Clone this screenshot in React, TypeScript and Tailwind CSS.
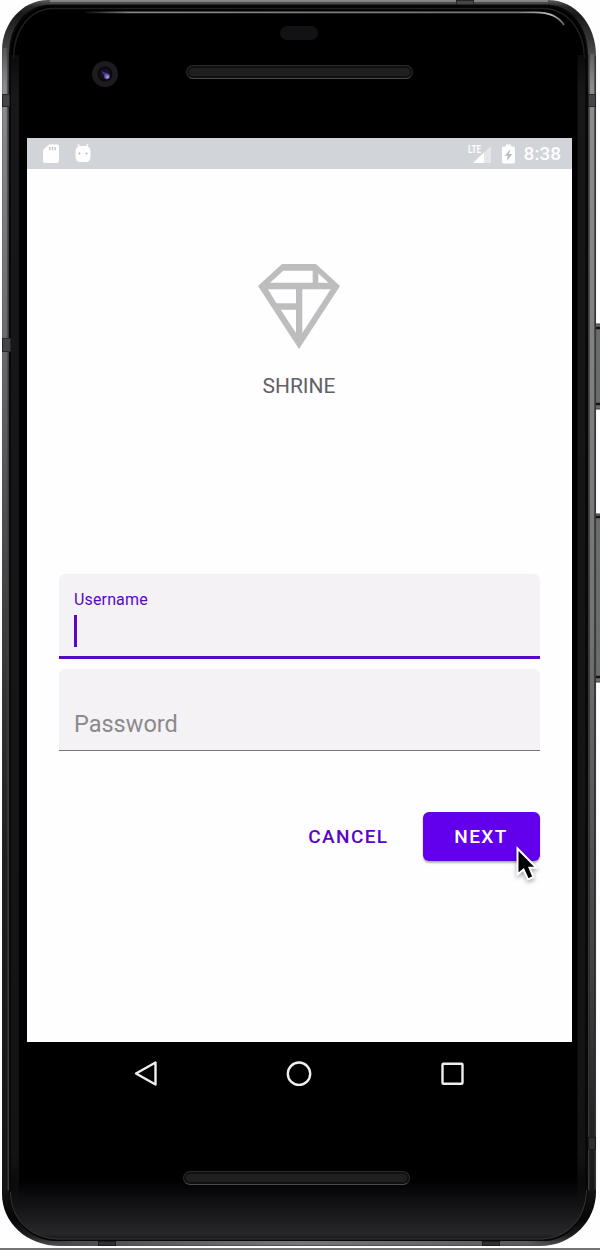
import React from "react";

function DeviceCasing() {
  return (
    <svg className="absolute inset-0 h-[1250px] w-[600px]" viewBox="0 0 600 1250" fill="none" aria-hidden="true">
      <defs>
        <linearGradient id="metal" x1="0" y1="0" x2="0" y2="1250" gradientUnits="userSpaceOnUse">
          <stop offset="0" stopColor="#5c5c5d" />
          <stop offset="0.005" stopColor="#2a2a2b" />
          <stop offset="0.012" stopColor="#19191a" />
          <stop offset="0.035" stopColor="#3c3c3d" />
          <stop offset="0.06" stopColor="#6a6b6c" />
          <stop offset="0.3" stopColor="#5f6061" />
          <stop offset="0.5" stopColor="#434344" />
          <stop offset="0.7" stopColor="#262627" />
          <stop offset="0.95" stopColor="#151516" />
          <stop offset="0.975" stopColor="#050505" />
          <stop offset="0.988" stopColor="#1c1c1d" />
          <stop offset="1" stopColor="#636364" />
        </linearGradient>
        <linearGradient id="shineLeft" x1="0" y1="40" x2="0" y2="1200" gradientUnits="userSpaceOnUse">
          <stop offset="0" stopColor="#4b4b4c" />
          <stop offset="0.04" stopColor="#8c8d8e" />
          <stop offset="0.25" stopColor="#6c6d6e" />
          <stop offset="0.5" stopColor="#3c3d3d" />
          <stop offset="0.7" stopColor="#1e1e1f" />
          <stop offset="1" stopColor="#141415" />
        </linearGradient>
        <linearGradient id="shineRight" x1="0" y1="40" x2="0" y2="1200" gradientUnits="userSpaceOnUse">
          <stop offset="0" stopColor="#4b4b4c" />
          <stop offset="0.04" stopColor="#8c8d8e" />
          <stop offset="0.5" stopColor="#747475" />
          <stop offset="0.8" stopColor="#414142" />
          <stop offset="1" stopColor="#161617" />
        </linearGradient>
        <linearGradient id="glass" x1="0" y1="1180" x2="0" y2="1240" gradientUnits="userSpaceOnUse">
          <stop offset="0" stopColor="#000000" />
          <stop offset="0.3" stopColor="#0e0d0f" />
          <stop offset="0.9" stopColor="#272629" />
          <stop offset="1" stopColor="#151516" />
        </linearGradient>
        <linearGradient id="strip" x1="0" y1="20" x2="0" y2="1215" gradientUnits="userSpaceOnUse">
          <stop offset="0" stopColor="#171618" stopOpacity="0" />
          <stop offset="0.06" stopColor="#171618" />
          <stop offset="0.95" stopColor="#131214" />
          <stop offset="1" stopColor="#131214" stopOpacity="0" />
        </linearGradient>
        <linearGradient id="topLine" x1="80" y1="0" x2="566" y2="0" gradientUnits="userSpaceOnUse">
          <stop offset="0" stopColor="#777777" stopOpacity="0" />
          <stop offset="0.1" stopColor="#858586" />
          <stop offset="0.9" stopColor="#777778" />
          <stop offset="0.97" stopColor="#bdbdbd" />
          <stop offset="1" stopColor="#555555" />
        </linearGradient>
        <linearGradient id="bottomEdge" x1="40" y1="0" x2="560" y2="0" gradientUnits="userSpaceOnUse">
          <stop offset="0" stopColor="#4a4a4b" stopOpacity="0" />
          <stop offset="0.06" stopColor="#4a4a4b" />
          <stop offset="0.5" stopColor="#777778" />
          <stop offset="0.94" stopColor="#5a5a5b" />
          <stop offset="1" stopColor="#4a4a4b" stopOpacity="0" />
        </linearGradient>
      </defs>
      <g fill="#6b6c6c" stroke="#3b3b3c" strokeWidth="1">
        <rect x="594" y="324" width="8" height="85" />
        <rect x="594" y="514" width="8" height="168" />
      </g>
      <path d="M596 328h4M596 404h4M596 517h4M596 677h4" stroke="#151516" strokeWidth="2.5" />
      <path d="M2 50C2 24 22 0 48 0H548C575 0 596 24 596 56V1192C596 1220 573 1246 540 1246H60C26 1246 2 1222 2 1194Z" fill="url(#metal)" />
      <path d="M4.6 48V1190" stroke="url(#shineLeft)" strokeWidth="4" />
      <path d="M592 54V1190" stroke="url(#shineRight)" strokeWidth="4" />
      <path d="M8.3 50V1190" stroke="#3c3c3d" strokeWidth="1.5" />
      <path d="M595.3 56V1190M588.7 54V1190" stroke="#3a3a3b" strokeWidth="1.5" />
      <path d="M50 1H548" stroke="#858586" strokeWidth="2" />
      <path d="M50 3.5H548" stroke="#4c4c4d" strokeWidth="2" />
      <path d="M10 54C10 27 26 5.5 52 5.5H545C571 5.5 587 27 587 57V1190C587 1220 567 1240.5 540 1240.5H60C29 1240.5 10 1218 10 1190Z" fill="url(#glass)" stroke="#080808" strokeWidth="2" />
      <path d="M13.5 58C14 29 30 9 53 8.5H543C567 9 584 29 584.5 58" stroke="#1f1f20" strokeWidth="1.5" />
      <path d="M15 1210V55M581.5 55V1210" stroke="url(#strip)" strokeWidth="8" />
      <path d="M85 12.3H535C548 12.3 558 15 564 25" stroke="url(#topLine)" strokeWidth="1.8" />
      <path d="M10.5 1192C11 1219 30 1239 60 1239H540C567 1239 586 1219 586.5 1190" stroke="#363538" strokeWidth="1" />
      <path d="M50 1243H550" stroke="url(#bottomEdge)" strokeWidth="4" />
      <g fill="#444546" stroke="#262627">
        <rect x="2.5" y="94.5" width="7" height="12" />
        <rect x="588.5" y="94.5" width="7" height="12" />
        <rect x="2.5" y="338.5" width="8" height="13" />
        <rect x="456.5" y="0.5" width="17" height="4" />
      </g>
      <g fill="#303031" stroke="#1c1c1d">
        <rect x="98.5" y="1241.5" width="17" height="4" />
        <rect x="482.5" y="1241.5" width="17" height="4" />
        <rect x="588.5" y="1137.5" width="7" height="12" />
      </g>
      <path d="M0 1249H600" stroke="#747475" strokeWidth="2" />
    </svg>
  );
}

function Speaker() {
  return (
    <div className="h-[14px] w-[227px] rounded-full border border-[#2b2a2c] border-b-[#4b4a4c] bg-[#111011] p-[2px]">
      <div className="h-full rounded-full bg-[#201f20]" />
    </div>
  );
}

function StatusBar() {
  return (
    <div className="flex h-[31px] items-center bg-[#d1d5d9] text-[#fefdff]">
      <svg className="ml-4 h-5 w-4" viewBox="0 0 16 20" fill="currentColor">
        <path d="M6 .5h8a2 2 0 0 1 2 2V17a2 2 0 0 1-2 2H2a2 2 0 0 1-2-2V6Z" />
        <path d="M6.8 3v3.2M9.5 3v3.2M12.2 3v3.2" stroke="#c2c6ca" strokeWidth="1.4" />
      </svg>
      <svg className="ml-[15.5px] h-5 w-4" viewBox="0 0 16 20" fill="currentColor">
        <path d="M3 0l2 3.5M13 0l-2 3.5" stroke="currentColor" strokeWidth="1.3" />
        <path d="M.5 7C.5 4 3 2 5 2h6c2 0 4.5 2 4.5 5v6c0 3-2 5-4 5h-7c-2 0-4-2-4-5Z" />
        <circle cx="4.5" cy="9.5" r=".9" fill="#adb1b5" />
        <circle cx="11.5" cy="9.5" r=".9" fill="#adb1b5" />
      </svg>
      <div className="ml-auto flex items-center">
        <svg className="h-[21px] w-[24px]" viewBox="0 0 24 21">
          <path d="M23 3v17H5Z" fill="#e4e6e9" />
          <path d="M16 9.5V20H5Z" fill="currentColor" />
          <text x="0" y="10" fontSize="11.5" fontWeight="700" textLength="13" lengthAdjust="spacingAndGlyphs" fill="currentColor" className="font-['Roboto',sans-serif]">LTE</text>
        </svg>
        <svg className="ml-[10px] h-5 w-[13px]" viewBox="0 0 13 20">
          <path d="M4 .5h5v2h2.5a1.5 1.5 0 0 1 1.5 1.5v14a1.5 1.5 0 0 1-1.5 1.5h-10A1.5 1.5 0 0 1 0 18V4a1.5 1.5 0 0 1 1.5-1.5H4Z" fill="currentColor" />
          <path d="M8.5 5 2.7 11.7h3L4.7 17l5.8-7H7Z" fill="#babec3" />
        </svg>
        <span className="ml-[9px] mr-[11px] text-[19px] leading-none font-medium">8:38</span>
      </div>
    </div>
  );
}

function ShrineLogo() {
  return (
    <svg className="h-[87px] w-[84px]" viewBox="0 0 84 87" fill="#bdbdbe">
      <path
        fillRule="evenodd"
        d="M25 1H59L83 23 42 86 1 23ZM26.3 7.7 13 19.7H55.7V7.7ZM61.3 10.5V19.7H71.5ZM11 26.3 19.5 40.3H39V26.3ZM23.7 46.7 39 70V46.7ZM45.3 26.3V70L73.7 26.3Z"
      />
    </svg>
  );
}

export default function App() {
  return (
    <div className="relative h-[1250px] w-[600px] overflow-hidden bg-[#fefdff] font-['Roboto',sans-serif]">
      <DeviceCasing />
      <div className="relative ml-[27px] flex h-[1250px] w-[545px] flex-col">
        <header className="flex h-[138px] flex-col items-center">
          <div className="mt-[26px] mr-[2px] h-[14px] w-[38px] rounded-full bg-[#121113]" />
          <div className="mt-[21px] flex w-full items-center">
            <div className="ml-[65px] flex size-[26px] items-center justify-center rounded-full bg-[#1d1b1f]">
              <svg className="size-[18px]" viewBox="0 0 18 18" fill="none">
                <circle cx="9" cy="9" r="7.5" fill="#09090b" />
                <circle cx="9" cy="9" r="5.5" fill="#15101f" />
                <path d="m5 6 5 7 4-2-3-3Z" fill="#43317c" />
                <circle cx="11" cy="11.5" r="2.7" fill="#7157b3" />
                <circle cx="11.5" cy="12" r="1.2" fill="#b5a7d6" />
              </svg>
            </div>
            <div className="ml-[68px] -mt-[5px]"><Speaker /></div>
          </div>
        </header>
        <main className="flex h-[904px] flex-col bg-[#fefdff]">
          <StatusBar />
          <div className="flex flex-col items-center pt-[94px] pr-px">
            <ShrineLogo />
            <h1 className="mt-[22px] text-[21px] leading-7 text-[#626164]">SHRINE</h1>
          </div>
          <form className="mr-8 ml-[31.5px] mt-[174px] w-[481px]">
            <div className="h-[85px] rounded-t-md border-b-[3px] border-[#5a08c7] bg-[#f4f2f5] px-[15.5px] pt-[16px]">
              <div className="text-[16px] leading-5 tracking-[0.15px] text-[#5a08c7]">Username</div>
              <div className="mt-[5px] h-[32px] w-[3px] bg-[#5a08c7]" />
            </div>
            <div className="mt-[10px] h-[82px] rounded-t-md border-b border-[#777579] bg-[#f4f2f5] px-[15.5px] pt-[39px] text-[23.5px] leading-8 text-[#8b898c]">Password</div>
            <div className="mt-[61px] flex items-center justify-end text-[19px] font-medium tracking-[1.4px]">
              <button type="button" className="mr-[34px] pt-[2px] text-[#5905c7]">CANCEL</button>
              <button type="button" className="h-[49px] w-[117px] rounded-[6px] bg-[#6200ee] pt-[2px] text-white shadow-[0_2px_2px_rgba(0,0,0,.3)]">NEXT</button>
            </div>
          </form>
        </main>
        <nav className="flex h-[63px] items-center bg-black">
          <svg className="ml-[106px] size-[26px]" viewBox="0 0 26 26" fill="none" stroke="#eeeeef" strokeWidth="2.4" strokeLinejoin="round">
            <path d="M22.5 1.5v22L3 12.5Z" />
          </svg>
          <svg className="ml-[127px] size-[26px]" viewBox="0 0 26 26" fill="none" stroke="#eeeeef" strokeWidth="2.4"><circle cx="13" cy="12.7" r="11.2" /></svg>
          <svg className="ml-[127px] size-[26px]" viewBox="0 0 26 26" fill="none" stroke="#eeeeef" strokeWidth="2.4"><rect x="3.5" y="2.7" width="20" height="20" rx="1" /></svg>
        </nav>
        <footer className="flex justify-center pr-[7px] pt-[66px]"><Speaker /></footer>
      </div>
      <svg className="absolute left-[514px] top-[845px] h-[38px] w-[26px] drop-shadow-[0_2px_2px_rgba(0,0,0,.35)]" viewBox="0 0 26 38">
        <path d="M3.5 3.5V29.5L9.5 24.5 14 34.5 19.5 32 15.5 22.8H22.5Z" fill="#000" stroke="#fff" strokeWidth="2" />
      </svg>
    </div>
  );
}
